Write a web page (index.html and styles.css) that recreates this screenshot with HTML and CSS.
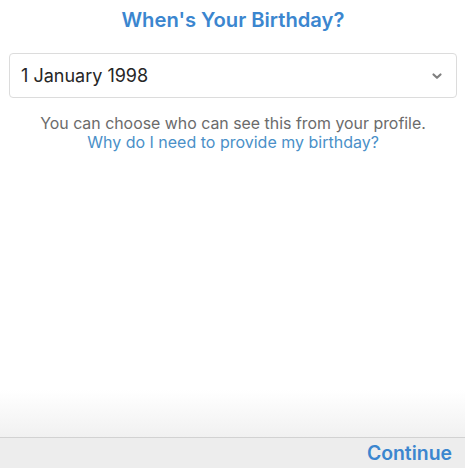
FILE: index.html
```html
<!DOCTYPE html>
<html lang="en">
<head>
    <meta charset="UTF-8">
    <title>When's Your Birthday?</title>
    <link rel="stylesheet" href="styles.css">
</head>
<body>
    <div class="screen">
        <div class="content">
            <h1>When's Your Birthday?</h1>

            <div class="date-select">
                <span class="date-value">1 January 1998</span>
                <svg class="chevron" width="12" height="8" viewBox="0 0 12 8">
                    <path d="M2.5 2.5 L6 5.8 L9.5 2.5" fill="none" stroke="#808080" stroke-width="2.2" stroke-linecap="round" stroke-linejoin="round"/>
                </svg>
            </div>

            <p class="hint">You can choose who can see this from your profile.</p>
            <a class="why" href="#">Why do I need to provide my birthday?</a>
        </div>

        <div class="fade"></div>
        <div class="bottom-bar">
            <a class="continue" href="#">Continue</a>
        </div>
    </div>
</body>
</html>
```

FILE: styles.css
```css
html, body {
    margin: 0;
    padding: 0;
    background: #fff;
}
body {
    font-family: Inter, "Liberation Sans", Arial, sans-serif;
}
.screen {
    width: 465px;
    height: 468px;
    display: flex;
    flex-direction: column;
    overflow: hidden;
}
.content {
    flex: 1;
    display: flex;
    flex-direction: column;
    align-items: center;
    padding: 8px 8px 0 9px;
}
h1 {
    margin: 0;
    font-size: 20.2px;
    font-weight: 600;
    color: #3b86cf;
    line-height: 24px;
}
.date-select {
    align-self: stretch;
    margin-top: 21px;
    height: 43px;
    border: 1px solid #dcdcdc;
    border-radius: 4px;
    display: flex;
    align-items: center;
    justify-content: space-between;
    padding: 0 13px 0 11px;
}
.date-value {
    font-size: 18px;
    color: #262626;
}
.chevron {
    display: block;
}
.hint {
    margin: 17px 0 0;
    font-size: 15.9px;
    color: #6b6b6b;
    line-height: 18px;
}
.why {
    font-size: 16px;
    color: #4a90c8;
    text-decoration: none;
    line-height: 18px;
}
.fade {
    height: 47px;
    background: linear-gradient(to bottom, #ffffff, #f1f1f1);
}
.bottom-bar {
    height: 30px;
    border-top: 1px solid #d2d2d2;
    background: #ededed;
    display: flex;
    align-items: center;
    justify-content: flex-end;
    padding-right: 13px;
}
.continue {
    font-size: 19.4px;
    font-weight: 600;
    color: #3b86cf;
    text-decoration: none;
}
```
